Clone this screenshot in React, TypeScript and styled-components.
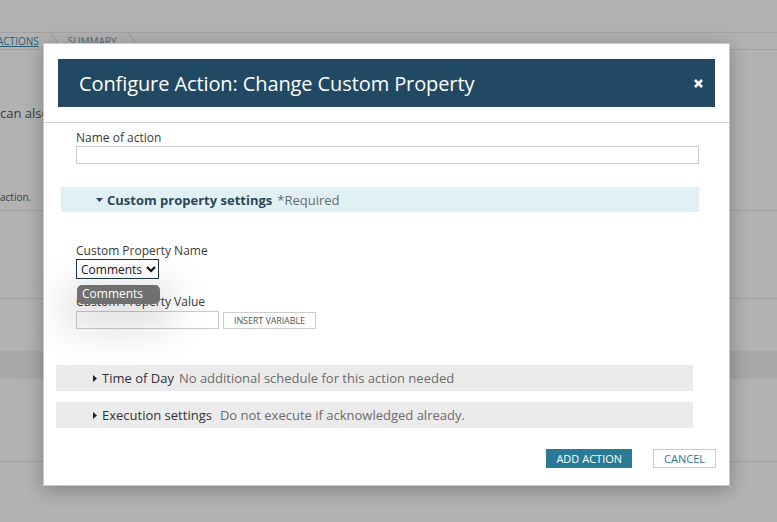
import React from 'react'
import styled, { createGlobalStyle } from 'styled-components'

const GlobalStyle = createGlobalStyle`
  html, body {
    margin: 0;
    padding: 0;
    width: 777px;
    height: 522px;
    overflow: hidden;
    font-family: "Open Sans", "Noto Sans", sans-serif;
  }
  * { box-sizing: border-box; }
`

const Page = styled.div`
  position: relative;
  width: 777px;
  height: 522px;
  background: #b2b2b2;
  overflow: hidden;
`

const TopBar = styled.div`
  height: 33px;
  border-bottom: 1px solid #a2a2a2;
  background: #b1b1b1;
`

const Crumbs = styled.div`
  height: 17px;
  display: flex;
  align-items: center;
  gap: 10px;
  margin-left: -3px;
  border-bottom: 1px solid #a2a2a2;
  font-size: 10px;
  color: #4d6878;
`

const Crumb = styled.span<{ $active?: boolean }>`
  color: ${p => (p.$active ? '#2a5b78' : '#566c79')};
  text-decoration: ${p => (p.$active ? 'underline' : 'none')};
`

const CrumbSep = styled.span`
  width: 9px;
  height: 17px;
  display: inline-flex;
  align-items: center;
`

const BgText = styled.div<{ $top: number; $size: number }>`
  margin-top: ${p => p.$top}px;
  margin-left: 0;
  font-size: ${p => p.$size}px;
  color: #3c3c3c;
  line-height: 1;
`

const BgLine = styled.div<{ $top: number }>`
  margin-top: ${p => p.$top}px;
  border-top: 1px solid #a0a0a0;
`

const BgBand = styled.div<{ $top: number }>`
  margin-top: ${p => p.$top}px;
  height: 28px;
  background: #a8a8a8;
`

const Modal = styled.div`
  position: absolute;
  left: 43px;
  top: 43px;
  width: 687px;
  height: 443px;
  background: #fff;
  border: 1px solid #c9c9c9;
  box-shadow: 0 4px 18px rgba(0, 0, 0, 0.28);
  display: flex;
  flex-direction: column;
`

const Head = styled.div`
  padding: 15px 14px 15px 14px;
  border-bottom: 1px solid #cfcfcf;
`

const Banner = styled.div`
  height: 48px;
  background: #214963;
  display: flex;
  align-items: center;
  justify-content: space-between;
  padding: 0 11px 0 21px;
`

const Title = styled.h1`
  margin: 0;
  font-size: 20px;
  font-weight: 400;
  color: #fff;
  letter-spacing: -0.1px;
`

const Close = styled.button`
  border: 0;
  background: none;
  padding: 0;
  width: 11px;
  height: 11px;
  display: flex;
  cursor: pointer;
`

const Body = styled.div`
  flex: 1;
  display: flex;
  flex-direction: column;
  padding: 7px 30px 0 17px;
  position: relative;
`

const Field = styled.div<{ $gap?: number }>`
  display: flex;
  flex-direction: column;
  padding-left: 15px;
  margin-top: ${p => p.$gap ?? 0}px;
`

const Label = styled.label`
  font-size: 12px;
  line-height: 16px;
  color: #3a3a3a;
`

const TextInput = styled.input<{ $w?: number }>`
  height: 18px;
  width: ${p => (p.$w ? `${p.$w}px` : '100%')};
  border: 1px solid #cccccc;
  background: #fff;
  font: inherit;
  padding: 0 4px;
  outline: none;
`

const SectionBar = styled.div`
  margin-top: 23px;
  height: 25px;
  background: #e1f0f5;
  display: flex;
  align-items: center;
  padding-left: 35px;
  font-size: 13px;
  gap: 5px;
`

const SectionTitle = styled.span`
  font-weight: 700;
  color: #2b4759;
  display: flex;
  align-items: center;
  gap: 4px;
`

const Muted = styled.span<{ $shift?: number }>`
  color: #6b6b6b;
  margin-left: ${p => p.$shift ?? 0}px;
`

const SelectBox = styled.div`
  width: 83px;
  height: 20px;
  border: 1px solid #1e3848;
  display: flex;
  align-items: center;
  justify-content: space-between;
  padding: 0 2px 0 4px;
  font-size: 12px;
  color: #222;
`

const Popup = styled.div`
  position: absolute;
  left: 33px;
  top: 162px;
  width: 83px;
  height: 19px;
  border-radius: 5px;
  background: #707070;
  color: #fff;
  font-size: 12px;
  line-height: 18px;
  padding-left: 5px;
  box-shadow: 0 12px 40px 14px rgba(0, 0, 0, 0.13);
  z-index: 2;
`

const ValueRow = styled.div`
  display: flex;
  align-items: center;
  gap: 4px;
`

const SmallButton = styled.button`
  height: 17px;
  margin-top: 2px;
  padding: 0 10px;
  border: 1px solid #cccccc;
  background: #fff;
  font: inherit;
  font-size: 9px;
  color: #555;
  letter-spacing: -0.1px;
`

const Rows = styled.div`
  margin: 36px 0 0 -5px;
  width: 637px;
  display: flex;
  flex-direction: column;
  gap: 11px;
`

const Row = styled.div`
  height: 26px;
  background: #ebebec;
  display: flex;
  align-items: center;
  padding-left: 37px;
  font-size: 13px;
  gap: 5px;
  color: #333;
`

const RowTitle = styled.span`
  display: flex;
  align-items: center;
  gap: 5px;
`

const Footer = styled.div`
  display: flex;
  justify-content: flex-end;
  gap: 21px;
  padding: 21px 13px 0 0;
  margin-right: -30px;
`

const Btn = styled.button<{ $primary?: boolean }>`
  height: 19px;
  padding: 0 ${p => (p.$primary ? 9 : 10)}px;
  border: 1px solid ${p => (p.$primary ? '#2a7a95' : '#cccccc')};
  background: ${p => (p.$primary ? '#2a7a95' : '#fff')};
  color: ${p => (p.$primary ? '#fff' : '#2a7a95')};
  font: inherit;
  font-size: 11px;
  line-height: 17px;
`

const Chevron = () => (
  <svg width="9" height="17" viewBox="0 0 9 17">
    <path d="M1 0 L8 8.5 L1 17" fill="none" stroke="#9a9a9a" strokeWidth="1" />
  </svg>
)

const CaretDown = () => (
  <svg width="7" height="4" viewBox="0 0 7 4">
    <path d="M0 0 H7 L3.5 4 Z" fill="#2b4759" />
  </svg>
)

const CaretRight = () => (
  <svg width="4" height="7" viewBox="0 0 4 7">
    <path d="M0 0 V7 L4 3.5 Z" fill="#222" />
  </svg>
)

const SelectArrow = () => (
  <svg width="10" height="7" viewBox="0 0 10 7">
    <path d="M1 1 L5 5 L9 1" fill="none" stroke="#111" strokeWidth="2.2" />
  </svg>
)

const CloseIcon = () => (
  <svg width="11" height="11" viewBox="0 0 11 11">
    <path d="M2 2 L9 9 M9 2 L2 9" stroke="#fff" strokeWidth="2.6" />
  </svg>
)

export default function App() {
  return (
    <>
      <GlobalStyle />
      <Page>
        <TopBar />
        <Crumbs>
          <Crumb $active>ACTIONS</Crumb>
          <CrumbSep>
            <Chevron />
          </CrumbSep>
          <Crumb>SUMMARY</Crumb>
          <CrumbSep>
            <Chevron />
          </CrumbSep>
        </Crumbs>
        <BgText $top={57} $size={13}>
          can also
        </BgText>
        <BgText $top={72} $size={10}>
          action.
        </BgText>
        <BgLine $top={8} />
        <BgLine $top={87} />
        <BgBand $top={52} />
        <BgLine $top={82} />

        <Modal>
          <Head>
            <Banner>
              <Title>Configure Action: Change Custom Property</Title>
              <Close aria-label="Close">
                <CloseIcon />
              </Close>
            </Banner>
          </Head>
          <Body>
            <Field>
              <Label>Name of action</Label>
              <TextInput />
            </Field>

            <SectionBar>
              <SectionTitle>
                <CaretDown />
                Custom property settings
              </SectionTitle>
              <Muted>*Required</Muted>
            </SectionBar>

            <Field $gap={31}>
              <Label>Custom Property Name</Label>
              <SelectBox>
                Comments
                <SelectArrow />
              </SelectBox>
            </Field>

            <Popup>Comments</Popup>

            <Field $gap={15}>
              <Label>Custom Property Value</Label>
              <ValueRow>
                <TextInput $w={143} />
                <SmallButton>INSERT VARIABLE</SmallButton>
              </ValueRow>
            </Field>

            <Rows>
              <Row>
                <RowTitle>
                  <CaretRight />
                  Time of Day
                </RowTitle>
                <Muted>No additional schedule for this action needed</Muted>
              </Row>
              <Row>
                <RowTitle>
                  <CaretRight />
                  Execution settings
                </RowTitle>
                <Muted $shift={3}>Do not execute if acknowledged already.</Muted>
              </Row>
            </Rows>

            <Footer>
              <Btn $primary>ADD ACTION</Btn>
              <Btn>CANCEL</Btn>
            </Footer>
          </Body>
        </Modal>
      </Page>
    </>
  )
}
